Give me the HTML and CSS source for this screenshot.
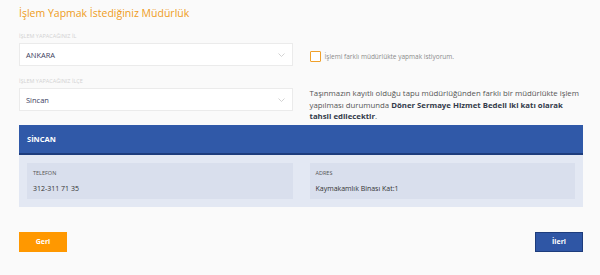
FILE: index.html
```html
<!DOCTYPE html>
<html lang="tr">
<head>
    <meta charset="UTF-8">
    <meta name="viewport" content="width=device-width, initial-scale=1.0">
    <title>Müdürlük Seçimi</title>
    <link rel="stylesheet" href="styles.css">
</head>
<body>

    <div class="page">
        <h2 class="title">İşlem Yapmak İstediğiniz Müdürlük</h2>

        <!-- İl / İlçe seçimi -->
        <div class="form-grid">
            <div class="col-left">
                <label class="field-label">İŞLEM YAPACAĞINIZ İL</label>
                <div class="select">
                    <span>ANKARA</span>
                    <svg class="chevron" width="7" height="4" viewBox="0 0 7 4"><path d="M0.5 0.5 L3.5 3.5 L6.5 0.5" fill="none" stroke="#c8c8c8" stroke-width="0.8"/></svg>
                </div>
                <label class="field-label second">İŞLEM YAPACAĞINIZ İLÇE</label>
                <div class="select">
                    <span>Sincan</span>
                    <svg class="chevron" width="7" height="4" viewBox="0 0 7 4"><path d="M0.5 0.5 L3.5 3.5 L6.5 0.5" fill="none" stroke="#c8c8c8" stroke-width="0.8"/></svg>
                </div>
            </div>
            <div class="col-right">
                <div class="check-row">
                    <span class="checkbox"></span>
                    <span>İşlemi farklı müdürlükte yapmak istiyorum.</span>
                </div>
                <p class="note"><span>Taşınmazın kayıtlı olduğu tapu müdürlüğünden farklı bir müdürlükte işlem</span><br><span>yapılması durumunda</span> <b>Döner Sermaye Hizmet Bedeli iki katı olarak</b><br><b>tahsil edilecektir</b>.</p>
            </div>
        </div>

        <!-- Müdürlük bilgileri -->
        <div class="office">
            <div class="office-head">SİNCAN</div>
            <div class="office-body">
                <div class="info-box">
                    <div class="info-label">TELEFON</div>
                    <div class="info-value">312-311 71 35</div>
                </div>
                <div class="info-box">
                    <div class="info-label">ADRES</div>
                    <div class="info-value">Kaymakamlık Binası Kat:1</div>
                </div>
            </div>
        </div>

        <div class="actions">
            <button class="btn btn-back">Geri</button>
            <button class="btn btn-next">İleri</button>
        </div>
    </div>

</body>
</html>
```

FILE: styles.css
```css
/* Reset */
* {
    margin: 0;
    padding: 0;
    box-sizing: border-box;
}

body {
    font-family: "Open Sans", Arial, sans-serif;
    background-color: #fafafa;
    color: #444;
    overflow: hidden;
}

.page {
    padding: 6px 17px 0 19px;
}

.title {
    font-size: 10.5px;
    line-height: 14px;
    font-weight: normal;
    color: #ef9c22;
}

/* Form area */
.form-grid {
    display: grid;
    grid-template-columns: 1fr 1fr;
    column-gap: 17px;
    margin-top: 12px;
}

.field-label {
    display: block;
    font-size: 5.5px;
    line-height: 9px;
    color: #d2d2d2;
    margin-bottom: 2px;
}

.field-label.second {
    margin-top: 11px;
}

.select {
    height: 23px;
    background: #fff;
    border: 1px solid #ebebeb;
    display: flex;
    align-items: center;
    justify-content: space-between;
    padding: 0 7px 0 6px;
    font-size: 7.5px;
    color: #3b4060;
}

.check-row {
    display: flex;
    align-items: center;
    gap: 4px;
    margin-top: 19px;
    font-size: 6.5px;
    color: #8a8a8a;
}

.checkbox {
    width: 11px;
    height: 11px;
    border: 1.5px solid #f0a02a;
    background: #fff;
    border-radius: 1px;
}

.note {
    margin-top: 26px;
    font-size: 7.8px;
    line-height: 11.5px;
    color: #555;
}

.note b {
    color: #333a4a;
}

/* Office panel */
.office {
    margin-top: 2px;
}

.office-head {
    background: #3059a8;
    border-bottom: 2px solid #1d3c7c;
    height: 30px;
    padding-left: 8px;
    display: flex;
    align-items: center;
    font-size: 7.5px;
    font-weight: bold;
    color: #fff;
}

.office-body {
    background: #e3e8f3;
    padding: 8px;
    display: grid;
    grid-template-columns: 1fr 1fr;
    column-gap: 17px;
}

.info-box {
    background: #d9dfed;
    height: 36px;
    padding: 6px 6px 0;
}

.info-label {
    font-size: 5.5px;
    line-height: 9px;
    color: #555;
}

.info-value {
    margin-top: 6px;
    font-size: 7px;
    line-height: 10px;
    color: #333;
}

/* Buttons */
.actions {
    display: flex;
    justify-content: space-between;
    margin-top: 25px;
}

.btn {
    width: 48px;
    height: 20px;
    border: none;
    font-family: "Open Sans", Arial, sans-serif;
    font-size: 7px;
    font-weight: bold;
    color: #fff;
    cursor: pointer;
}

.btn-back {
    background: #ff9800;
}

.btn-next {
    background: #2f56a5;
    border: 1px solid #1d3c7c;
}
```
